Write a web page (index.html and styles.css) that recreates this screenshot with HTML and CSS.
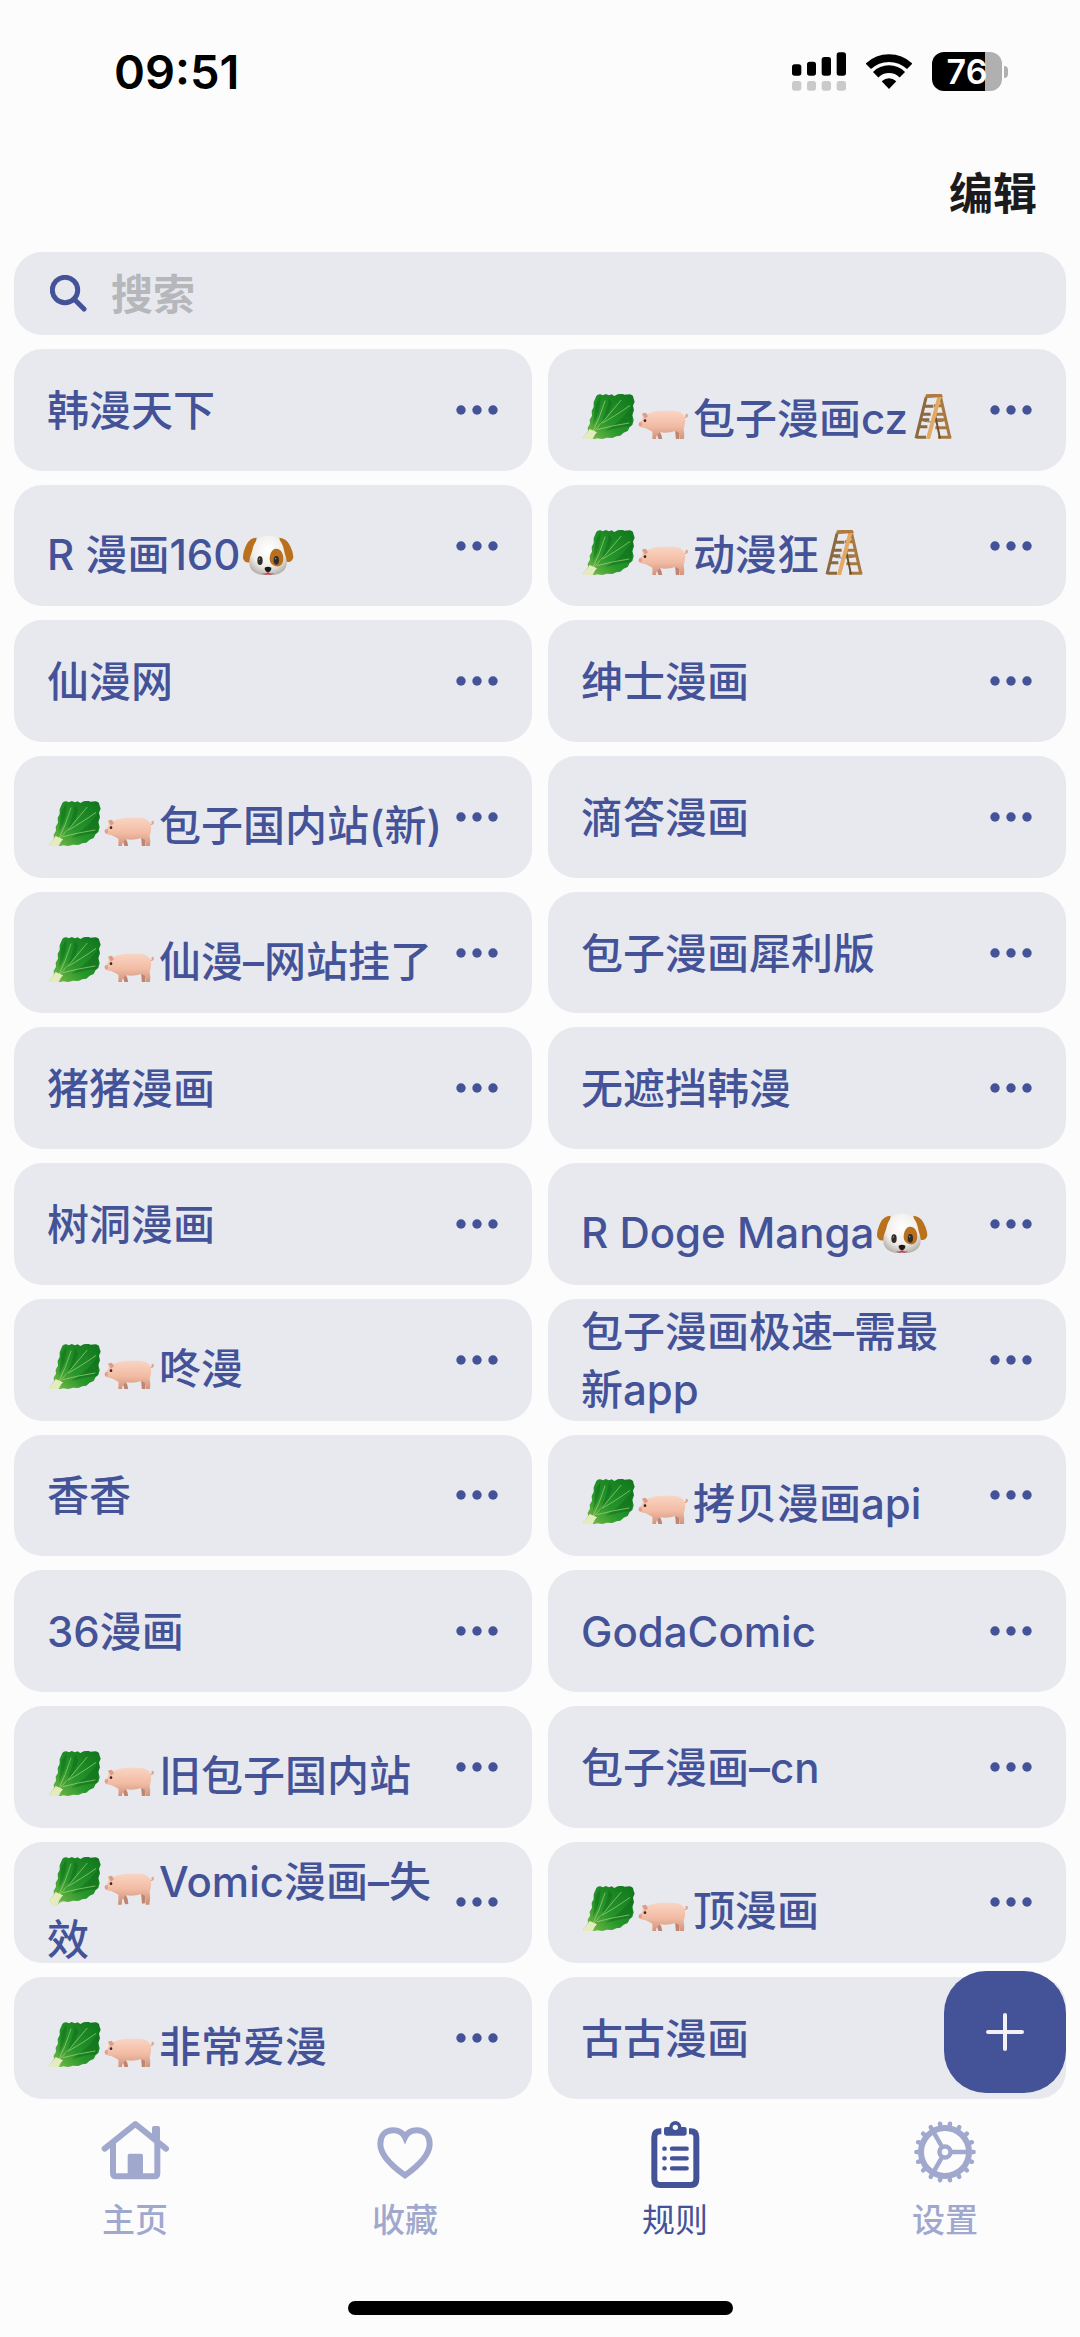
FILE: index.html
```html
<!DOCTYPE html>
<html lang="zh-CN">
  <head>
    <meta charset="UTF-8" />
    <meta name="viewport" content="width=device-width, initial-scale=1.0" />
    <title>规则</title>
    <link rel="stylesheet" href="styles.css">
  </head>
  <body>
    <!-- Shared icons -->
    <svg class="sprite" aria-hidden="true">
      <defs>
        <linearGradient id="leafFill" x1="1" y1="0" x2="0" y2="1">
          <stop offset="0" stop-color="#0f751c" />
          <stop offset="0.55" stop-color="#27962b" />
          <stop offset="0.8" stop-color="#62b040" />
          <stop offset="1" stop-color="#d5e3a4" />
        </linearGradient>
        <linearGradient id="pigFill" x1="0" y1="0" x2="0" y2="1">
          <stop offset="0" stop-color="#f9d5c3" />
          <stop offset="0.5" stop-color="#f2bba3" />
          <stop offset="1" stop-color="#c98c75" />
        </linearGradient>
        <radialGradient id="dogFill" cx="0.5" cy="0.35" r="0.65">
          <stop offset="0" stop-color="#ffffff" />
          <stop offset="0.65" stop-color="#f1eeea" />
          <stop offset="1" stop-color="#b9b3ad" />
        </radialGradient>
      </defs>

      <symbol id="leaf" viewBox="6 27 168 150" preserveAspectRatio="xMidYMin slice">
        <path fill="url(#leafFill)" d="M52 33Q56 27 64 28L72 31L80 27L90 31L98 28L106 33L116 28L130 26L136 29L152 28Q163 30 163 38L167 50L162 62L165 76L160 90L164 106L160 120L152 126L146 138L134 143L124 152L112 154L100 159L84 158L70 162L54 160L44 164L38 170Q30 177 24 174L12 157Q22 148 27 138L26 128L33 116L32 104L39 92L38 78L44 66L44 52Z" />
        <path fill="#0a6418" opacity="0.4" d="M90 40L100 54Q92 90 60 128Q80 88 90 40ZM162 60Q140 96 80 138Q120 126 156 124L160 92ZM50 56L64 36Q66 80 42 120Z" />
        <path fill="none" stroke="#a9d680" stroke-linecap="round" stroke-width="2" d="M28 156Q76 108 126 46M40 143Q62 100 78 48M54 134Q98 122 150 114M70 114Q104 96 152 62" />
        <path fill="#e4ebbe" d="M12 157Q24 146 32 132L54 142Q42 154 38 170Q30 177 24 174Z" />
      </symbol>

      <symbol id="pig" viewBox="174 27 168 150" preserveAspectRatio="xMidYMin slice">
        <path fill="none" stroke="#dfa793" stroke-width="4" stroke-linecap="round" d="M314 98Q326 98 325 90Q321 86 321 93" />
        <path fill="#c08570" d="M232 132L240 136Q250 152 250 168L240 169L234 148ZM288 132L300 134L300 166L291 167Z" />
        <path fill="url(#pigFill)" d="M190 88L196 83L206 86Q222 78 244 77H284Q310 78 317 96Q321 112 314 132Q318 152 313 170H302L300 144L290 138Q266 146 242 142L232 154L230 170H219Q221 156 220 140Q208 134 200 130Q184 128 180 121Q178 113 184 110Q190 104 191 98Z" />
        <path fill="#dc9c86" d="M189 86L200 83L207 94L198 101Z" />
        <ellipse cx="184" cy="118" rx="5" ry="7" fill="#e2a08c" />
        <circle cx="198" cy="107" r="4" fill="#3b2421" />
      </symbol>

      <symbol id="dog" viewBox="8 11 168 150" preserveAspectRatio="xMidYMin slice">
        <path fill="#b9711b" d="M58 34Q38 34 28 54Q16 78 17 96Q22 112 38 108Q50 88 58 34ZM126 34Q148 36 157 56Q168 78 168 94Q162 110 148 106Q134 88 126 34Z" />
        <path fill="url(#dogFill)" d="M92 28C122 28 136 46 140 72C142 84 148 92 148 110C148 136 122 148 92 148C62 148 36 136 36 110C36 92 42 84 45 72C50 46 64 28 92 28Z" />
        <path fill="#b8701e" d="M117 67C132 67 139 84 138 98C137 114 128 122 116 120C102 116 94 106 98 88C101 75 107 67 117 67Z" />
        <ellipse cx="68" cy="103" rx="8" ry="13" fill="#302c2c" />
        <ellipse cx="117" cy="102" rx="8" ry="13" fill="#302c2c" />
        <circle cx="66" cy="98" r="2" fill="#aaa" />
        <circle cx="115" cy="97" r="2" fill="#aaa" />
        <path fill="#e9707f" d="M82 141Q92 136 102 141V150Q92 162 82 150Z" />
        <path fill="#1c1919" d="M82 124Q92 118 102 124Q103 134 92 138Q81 134 82 124Z" />
        <path fill="none" stroke="#5a4d49" stroke-width="2" d="M92 137V142M76 142Q86 146 92 141Q98 146 108 142" />
      </symbol>

      <symbol id="ladder" viewBox="12 27 168 150" preserveAspectRatio="xMidYMin slice">
        <path fill="none" stroke="#8c6a3f" stroke-width="9" d="M66 38L36 160M60 64H88M54 88H80M50 104H76M47 125H70M38 157H66" />
        <path fill="none" stroke="#777" stroke-width="3" d="M58 108Q80 114 118 108" />
        <path fill="none" stroke="#a77840" stroke-width="9" d="M110 38L138 160M90 62H114M88 88H120M92 104H122M94 128H130M102 157H142" />
        <path fill="none" stroke="#6f502c" stroke-width="6" d="M92 84L108 160" />
        <path fill="none" stroke="#e2aa64" stroke-width="12" d="M106 36L72 162" />
        <path fill="#b07a42" d="M66 28L112 25L117 36L62 40Z" />
      </symbol>

      <symbol id="dots" viewBox="0 0 42 10">
        <circle cx="5" cy="5" r="4.7" />
        <circle cx="21" cy="5" r="4.7" />
        <circle cx="37" cy="5" r="4.7" />
      </symbol>
    </svg>

    <!-- Status bar -->
    <div class="status-bar">
      <span class="time">09:51</span>
      <div class="status-icons">
        <svg class="signal" viewBox="150 156 162 117">
          <path d="M150 201q0-8 8-8h12q8 0 8 8v18q0 8-8 8h-12q-8 0-8-8zM195 193q0-8 8-8h11q8 0 8 8v26q0 8-8 8h-11q-8 0-8-8zM239 179q0-8 8-8h12q8 0 8 8v40q0 8-8 8h-12q-8 0-8-8zM284 165q0-8 8-8h12q8 0 8 8v54q0 8-8 8h-12q-8 0-8-8z" />
          <g fill="#cacaca">
            <rect x="150" y="243" width="28" height="29" rx="8" />
            <rect x="195" y="243" width="27" height="29" rx="8" />
            <rect x="239" y="243" width="28" height="29" rx="8" />
            <rect x="284" y="243" width="28" height="29" rx="8" />
          </g>
        </svg>
        <svg class="wifi" viewBox="374 162 138 105">
          <path fill="none" stroke="#000" stroke-width="23" d="M381 199A90 90 0 0 1 505 199M403 224A57 57 0 0 1 483 224" />
          <path d="M421 244Q443 225 465 244L443 267Z" />
        </svg>
        <div class="battery">
          <span class="battery-level">76</span>
          <span class="battery-cap"></span>
        </div>
      </div>
    </div>

    <!-- Header -->
    <header class="header">
      <button type="button" class="edit-button">编辑</button>
    </header>

    <!-- Rules -->
    <main class="content">
      <label class="search">
        <svg class="search-icon" viewBox="0 0 37 37">
          <circle cx="15" cy="15" r="12.7" />
          <path d="M24 24L34 34" />
        </svg>
        <input class="search-input" type="search" placeholder="搜索" aria-label="搜索" />
      </label>

      <ul class="rules">
        <li class="rule"><span class="name">韩漫天下</span><button type="button" class="more" aria-label="更多"><svg><use href="#dots" /></svg></button></li>
        <li class="rule"><span class="name has-emoji"><svg class="emoji"><use href="#leaf" /></svg><svg class="emoji"><use href="#pig" /></svg>包子漫画cz<svg class="emoji"><use href="#ladder" /></svg></span><button type="button" class="more" aria-label="更多"><svg><use href="#dots" /></svg></button></li>
        <li class="rule"><span class="name has-emoji">R 漫画160<svg class="emoji"><use href="#dog" /></svg></span><button type="button" class="more" aria-label="更多"><svg><use href="#dots" /></svg></button></li>
        <li class="rule"><span class="name has-emoji"><svg class="emoji"><use href="#leaf" /></svg><svg class="emoji"><use href="#pig" /></svg>动漫狂<svg class="emoji"><use href="#ladder" /></svg></span><button type="button" class="more" aria-label="更多"><svg><use href="#dots" /></svg></button></li>
        <li class="rule"><span class="name">仙漫网</span><button type="button" class="more" aria-label="更多"><svg><use href="#dots" /></svg></button></li>
        <li class="rule"><span class="name">绅士漫画</span><button type="button" class="more" aria-label="更多"><svg><use href="#dots" /></svg></button></li>
        <li class="rule"><span class="name has-emoji"><svg class="emoji"><use href="#leaf" /></svg><svg class="emoji"><use href="#pig" /></svg>包子国内站(新)</span><button type="button" class="more" aria-label="更多"><svg><use href="#dots" /></svg></button></li>
        <li class="rule"><span class="name">滴答漫画</span><button type="button" class="more" aria-label="更多"><svg><use href="#dots" /></svg></button></li>
        <li class="rule"><span class="name has-emoji"><svg class="emoji"><use href="#leaf" /></svg><svg class="emoji"><use href="#pig" /></svg>仙漫–网站挂了</span><button type="button" class="more" aria-label="更多"><svg><use href="#dots" /></svg></button></li>
        <li class="rule"><span class="name">包子漫画犀利版</span><button type="button" class="more" aria-label="更多"><svg><use href="#dots" /></svg></button></li>
        <li class="rule"><span class="name">猪猪漫画</span><button type="button" class="more" aria-label="更多"><svg><use href="#dots" /></svg></button></li>
        <li class="rule"><span class="name">无遮挡韩漫</span><button type="button" class="more" aria-label="更多"><svg><use href="#dots" /></svg></button></li>
        <li class="rule"><span class="name">树洞漫画</span><button type="button" class="more" aria-label="更多"><svg><use href="#dots" /></svg></button></li>
        <li class="rule"><span class="name has-emoji">R Doge Manga<svg class="emoji"><use href="#dog" /></svg></span><button type="button" class="more" aria-label="更多"><svg><use href="#dots" /></svg></button></li>
        <li class="rule"><span class="name has-emoji"><svg class="emoji"><use href="#leaf" /></svg><svg class="emoji"><use href="#pig" /></svg>咚漫</span><button type="button" class="more" aria-label="更多"><svg><use href="#dots" /></svg></button></li>
        <li class="rule"><span class="name">包子漫画极速–需最新app</span><button type="button" class="more" aria-label="更多"><svg><use href="#dots" /></svg></button></li>
        <li class="rule"><span class="name">香香</span><button type="button" class="more" aria-label="更多"><svg><use href="#dots" /></svg></button></li>
        <li class="rule"><span class="name has-emoji"><svg class="emoji"><use href="#leaf" /></svg><svg class="emoji"><use href="#pig" /></svg>拷贝漫画api</span><button type="button" class="more" aria-label="更多"><svg><use href="#dots" /></svg></button></li>
        <li class="rule"><span class="name">36漫画</span><button type="button" class="more" aria-label="更多"><svg><use href="#dots" /></svg></button></li>
        <li class="rule"><span class="name">GodaComic</span><button type="button" class="more" aria-label="更多"><svg><use href="#dots" /></svg></button></li>
        <li class="rule"><span class="name has-emoji"><svg class="emoji"><use href="#leaf" /></svg><svg class="emoji"><use href="#pig" /></svg>旧包子国内站</span><button type="button" class="more" aria-label="更多"><svg><use href="#dots" /></svg></button></li>
        <li class="rule"><span class="name">包子漫画–cn</span><button type="button" class="more" aria-label="更多"><svg><use href="#dots" /></svg></button></li>
        <li class="rule"><span class="name has-emoji two-lines"><svg class="emoji"><use href="#leaf" /></svg><svg class="emoji"><use href="#pig" /></svg>Vomic漫画–失效</span><button type="button" class="more" aria-label="更多"><svg><use href="#dots" /></svg></button></li>
        <li class="rule"><span class="name has-emoji"><svg class="emoji"><use href="#leaf" /></svg><svg class="emoji"><use href="#pig" /></svg>顶漫画</span><button type="button" class="more" aria-label="更多"><svg><use href="#dots" /></svg></button></li>
        <li class="rule"><span class="name has-emoji"><svg class="emoji"><use href="#leaf" /></svg><svg class="emoji"><use href="#pig" /></svg>非常爱漫</span><button type="button" class="more" aria-label="更多"><svg><use href="#dots" /></svg></button></li>
        <li class="rule"><span class="name">古古漫画</span><button type="button" class="more" aria-label="更多"><svg><use href="#dots" /></svg></button></li>
      </ul>

      <button type="button" class="add-button" aria-label="添加">
        <svg viewBox="0 0 38 38"><path d="M19 2V36M2 19H36" /></svg>
      </button>
    </main>

    <!-- Tab bar -->
    <nav class="tab-bar">
      <a href="#" class="tab">
        <svg class="tab-icon" viewBox="123 120 204 204">
          <g fill="none" stroke="currentColor" stroke-width="18" stroke-linejoin="round">
            <path stroke-linecap="round" d="M134 206L226 132L318 206" />
            <path d="M159 186V280Q159 289 168 289H283Q292 289 292 280V186" />
          </g>
          <path fill="currentColor" d="M276 172V144q0-6 6-6h12q6 0 6 6V192zM203 290V227q0-6 6-6h34q6 0 6 6V290z" />
        </svg>
        <span>主页</span>
      </a>
      <a href="#" class="tab">
        <svg class="tab-icon" viewBox="932 120 204 204">
          <path fill="none" stroke="currentColor" stroke-width="18" d="M1034 286C990 255 960 222 960 192C960 166 976 151 998 151C1014 151 1028 159 1034 172C1040 159 1054 151 1070 151C1092 151 1108 166 1108 192C1108 222 1078 255 1034 286Z" />
        </svg>
        <span>收藏</span>
      </a>
      <a href="#" class="tab active">
        <svg class="tab-icon" viewBox="123 120 204 204">
          <path fill="none" stroke="currentColor" stroke-width="18" d="M184 154H180Q163 154 163 172V297Q163 315 180 315H272Q289 315 289 297V172Q289 154 272 154H267" />
          <path fill="currentColor" fill-rule="evenodd" d="M192 147q0-6 6-6h10a18 18 0 0 1 36 0h10q6 0 6 6v13q0 7-7 7h-54q-7 0-7-7zM226 134a8 8 0 1 0 0 16a8 8 0 1 0 0-16z" />
          <path fill="none" stroke="currentColor" stroke-width="13" stroke-linecap="round" d="M216 206H260M216 235H260M216 265H260M193 206h1M193 235h1M193 265h1" />
        </svg>
        <span>规则</span>
      </a>
      <a href="#" class="tab">
        <svg class="tab-icon" viewBox="-34 -32 68 68">
          <g fill="none" stroke="currentColor" stroke-linecap="round">
            <circle r="24" stroke-width="6" />
            <circle r="5.5" stroke-width="4.5" />
            <path stroke-width="4.5" stroke-linecap="butt" d="M7 0H22M-3.5 6.1L-11 19.1M-3.5 -6.1L-11 -19.1" />
            <path stroke-width="4.5" d="M26 0L28.6 0M24.4 8.9L26.9 9.8M19.9 16.7L21.9 18.4M13 22.5L14.3 24.8M4.5 25.6L5 28.2M-26 0L-28.6 0M-24.4 8.9L-26.9 9.8M-19.9 16.7L-21.9 18.4M-13 22.5L-14.3 24.8M-4.5 25.6L-5 28.2M24.4 -8.9L26.9 -9.8M19.9 -16.7L21.9 -18.4M13 -22.5L14.3 -24.8M4.5 -25.6L5 -28.2M-24.4 -8.9L-26.9 -9.8M-19.9 -16.7L-21.9 -18.4M-13 -22.5L-14.3 -24.8M-4.5 -25.6L-5 -28.2" />
          </g>
        </svg>
        <span>设置</span>
      </a>
    </nav>
    <div class="home-indicator"></div>
  </body>
</html>
```
FILE: styles.css
```css
* {
  margin: 0;
  padding: 0;
  box-sizing: border-box;
}
body {
  display: flex;
  flex-direction: column;
  min-height: 100vh;
  background-color: #fcfcfd;
  color: #445398;
  font-family: Inter, "Noto Sans CJK SC", sans-serif;
  font-size: 42px;
  font-weight: 500;
}
button,
input {
  border: none;
  background: none;
  color: inherit;
  font: inherit;
}
button {
  cursor: pointer;
}

.sprite {
  position: absolute;
  width: 0;
  height: 0;
}

/* Status bar */
.status-bar {
  display: flex;
  align-items: center;
  justify-content: space-between;
  height: 143px;
  padding: 0 72px 0 114px;
  color: #000;
}
.time {
  font-size: 47px;
  font-weight: 600;
}
.status-icons {
  display: flex;
  align-items: center;
  gap: 20px;
}
.signal {
  width: 54px;
  height: 39px;
}
.wifi {
  width: 46px;
  height: 35px;
}
.battery {
  display: flex;
  align-items: center;
  gap: 2px;
}
.battery-level {
  width: 70px;
  height: 39px;
  border-radius: 12px;
  background: linear-gradient(to right, #000 76%, #b0b0b0 76%);
  color: #fff;
  font-size: 34px;
  font-weight: 600;
  line-height: 39px;
  text-align: center;
}
.battery-cap {
  width: 4px;
  height: 12px;
  border-radius: 0 4px 4px 0;
  background-color: #b0b0b0;
}

/* Header */
.header {
  display: flex;
  justify-content: flex-end;
  height: 109px;
  padding: 0 43px;
}
.edit-button {
  height: 95px;
  color: #1b1b1d;
  font-size: 44px;
  font-weight: 700;
}

/* Search and rule list */
.content {
  position: relative;
  display: flex;
  flex: 1;
  flex-direction: column;
  gap: 14px;
  padding: 0 14px;
}
.search {
  display: flex;
  align-items: center;
  gap: 24px;
  height: 83px;
  padding: 0 36px;
  border-radius: 28px;
  background-color: #e8e9ef;
}
.search-icon {
  width: 37px;
  height: 37px;
  fill: none;
  stroke: #445398;
  stroke-width: 5;
  stroke-linecap: round;
}
.search-input {
  flex: 1;
  min-width: 0;
  padding-top: 2px;
  font-weight: 700;
  outline: none;
}
.search-input::placeholder {
  color: #b6b7bb;
}

.rules {
  display: grid;
  flex: 1;
  grid-template-columns: 1fr 1fr;
  grid-auto-rows: 1fr;
  gap: 14px 16px;
  list-style: none;
}
.rule {
  display: flex;
  align-items: center;
  padding-left: 33px;
  border-radius: 28px;
  background-color: #e8e9ef;
}
.name {
  flex: 1;
  padding-top: 2px;
  line-height: 58px;
}
/* names with an emoji sit lower in the card */
.has-emoji {
  height: 58px;
  padding-top: 9px;
}
.emoji {
  width: 56px;
  height: 45px;
  margin: 4px 0 9px;
  vertical-align: top;
}
.two-lines {
  height: 116px;
}
.two-lines .emoji {
  height: 50px;
  margin-bottom: 4px;
}
.more {
  display: flex;
  align-items: center;
  align-self: stretch;
  padding: 0 34px 0 14px;
}
.more svg {
  width: 42px;
  height: 10px;
  fill: #445398;
}

.add-button {
  position: absolute;
  right: 14px;
  bottom: 6px;
  display: flex;
  align-items: center;
  justify-content: center;
  width: 122px;
  height: 122px;
  border-radius: 42px;
  background-color: #445398;
}
.add-button svg {
  width: 38px;
  height: 38px;
  stroke: #f1f0f6;
  stroke-width: 4;
  stroke-linecap: round;
}

/* Tab bar */
.tab-bar {
  display: flex;
  padding-top: 21px;
}
.tab {
  display: flex;
  flex: 1;
  flex-direction: column;
  align-items: center;
  gap: 12px;
  color: #a1a8cd;
  font-size: 33px;
  line-height: 40px;
  text-decoration: none;
}
.active {
  color: #445398;
  font-weight: 400;
}
.tab-icon {
  width: 68px;
  height: 68px;
}
.home-indicator {
  align-self: center;
  width: 385px;
  height: 14px;
  margin: 61px 0 22px;
  border-radius: 7px;
  background-color: #000;
}
```
